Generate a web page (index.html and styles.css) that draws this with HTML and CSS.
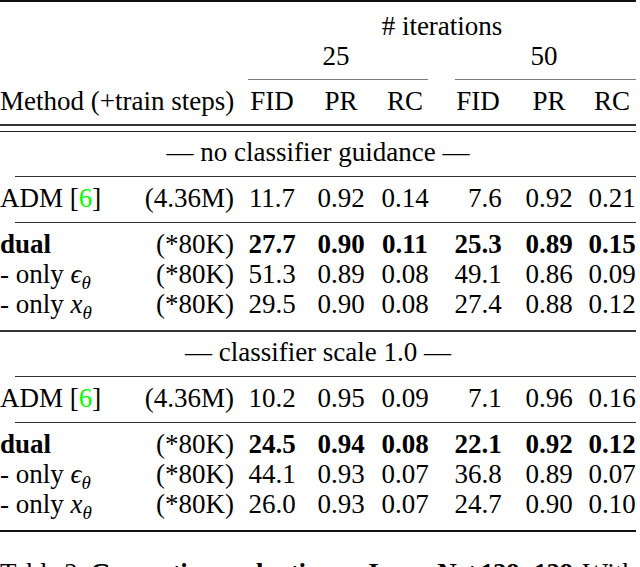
FILE: index.html
```html
<!DOCTYPE html>
<html>
<head>
<meta charset="utf-8">
<link rel="stylesheet" href="styles.css">
</head>
<body>
<div class="table">
  <div class="toprule"></div>
  <div class="row r-iter"><span class="all">#&nbsp;iterations</span></div>
  <div class="row"><span class="g1">25</span><span class="g2">50</span></div>
  <div class="cmid"><span class="cm cm1"></span><span class="cm cm2"></span></div>
  <div class="row r-head">
    <span class="c12">Method (+train steps)</span>
    <span class="n">FID</span><span class="n">PR</span><span class="n">RC</span>
    <span class="gap"></span>
    <span class="n">FID</span><span class="n">PR</span><span class="n">RC</span>
  </div>
  <div class="midrule first"></div>
  <div class="midrule second"></div>

  <div class="section">
    <div class="row r-title"><span class="full">— no classifier guidance —</span></div>
    <div class="subrule"></div>
    <div class="row r-adm">
      <span class="m">ADM [<span class="cite">6</span>]</span><span class="steps">(4.36M)</span>
      <span class="n">11.7</span><span class="n">0.92</span><span class="n">0.14</span>
      <span class="gap"></span>
      <span class="n"><span class="ph">0</span>7.6</span><span class="n">0.92</span><span class="n">0.21</span>
    </div>
    <div class="subrule"></div>
    <div class="row r-dual">
      <span class="m b">dual</span><span class="steps">(*80K)</span>
      <span class="n b">27.7</span><span class="n b">0.90</span><span class="n b">0.11</span>
      <span class="gap"></span>
      <span class="n b">25.3</span><span class="n b">0.89</span><span class="n b">0.15</span>
    </div>
    <div class="row">
      <span class="m">- only <span class="math">ϵ<sub>θ</sub></span></span><span class="steps">(*80K)</span>
      <span class="n">51.3</span><span class="n">0.89</span><span class="n">0.08</span>
      <span class="gap"></span>
      <span class="n">49.1</span><span class="n">0.86</span><span class="n">0.09</span>
    </div>
    <div class="row">
      <span class="m">- only <span class="math">x<sub>θ</sub></span></span><span class="steps">(*80K)</span>
      <span class="n">29.5</span><span class="n">0.90</span><span class="n">0.08</span>
      <span class="gap"></span>
      <span class="n">27.4</span><span class="n">0.88</span><span class="n">0.12</span>
    </div>
  </div>
  <div class="midrule sec-end"></div>

  <div class="section">
    <div class="row r-title"><span class="full">— classifier scale 1.0 —</span></div>
    <div class="subrule"></div>
    <div class="row r-adm">
      <span class="m">ADM [<span class="cite">6</span>]</span><span class="steps">(4.36M)</span>
      <span class="n">10.2</span><span class="n">0.95</span><span class="n">0.09</span>
      <span class="gap"></span>
      <span class="n"><span class="ph">0</span>7.1</span><span class="n">0.96</span><span class="n">0.16</span>
    </div>
    <div class="subrule"></div>
    <div class="row r-dual">
      <span class="m b">dual</span><span class="steps">(*80K)</span>
      <span class="n b">24.5</span><span class="n b">0.94</span><span class="n b">0.08</span>
      <span class="gap"></span>
      <span class="n b">22.1</span><span class="n b">0.92</span><span class="n b">0.12</span>
    </div>
    <div class="row">
      <span class="m">- only <span class="math">ϵ<sub>θ</sub></span></span><span class="steps">(*80K)</span>
      <span class="n">44.1</span><span class="n">0.93</span><span class="n">0.07</span>
      <span class="gap"></span>
      <span class="n">36.8</span><span class="n">0.89</span><span class="n">0.07</span>
    </div>
    <div class="row">
      <span class="m">- only <span class="math">x<sub>θ</sub></span></span><span class="steps">(*80K)</span>
      <span class="n">26.0</span><span class="n">0.93</span><span class="n">0.07</span>
      <span class="gap"></span>
      <span class="n">24.7</span><span class="n">0.90</span><span class="n">0.10</span>
    </div>
  </div>
  <div class="bottomrule"></div>
</div>
<p class="caption">Table 2: <b>Generation evaluation on ImageNet 128×128.</b> With</p>
</body>
</html>
```

FILE: styles.css
```css
html, body {
  margin: 0;
  padding: 0;
  background: #fff;
}
body {
  width: 640px;
  height: 567px;
  overflow: hidden;
  font-family: "Liberation Serif", "Times New Roman", serif;
  font-size: 27px;
  color: #000;
}
.table {
  width: 636px;
}
.row, .cmid {
  display: grid;
  grid-template-columns: 140px 100px 64px 74px 54px 14px 64px 78px 48px;
}
.row {
  height: 30px;
  line-height: 30px;
  white-space: nowrap;
}
.all { grid-column: 3 / 10; text-align: center; padding-left: 8px; }
.g1 { grid-column: 3 / 6; text-align: center; }
.g2 { grid-column: 7 / 10; text-align: center; padding-left: 6px; }
.c12 { grid-column: 1 / 3; }
.full { grid-column: 1 / 10; text-align: center; }
.m { grid-column: 1 / 2; }
.steps { grid-column: 2 / 3; text-align: right; padding-right: 6px; }
.n { text-align: center; }
.b { font-weight: bold; }
.cite { color: #00ff00; }
.ph { visibility: hidden; }
.math {
  font-family: "Liberation Serif", "DejaVu Serif", serif;
  font-style: italic;
}
.math sub {
  font-size: 19px;
  line-height: 0;
  vertical-align: -6px;
}

.toprule, .bottomrule {
  height: 2px;
  background: #111;
}
.r-iter { margin-top: 9px; }
.cmid { margin-top: 8px; height: 1px; }
.cm { height: 1px; background: #7a7a7a; }
.cm1 { grid-column: 3 / 6; margin-left: 8px; margin-right: 4px; }
.cm2 { grid-column: 7 / 10; margin-left: 9px; }
.r-head { margin-top: 6px; }

.midrule { height: 2px; background: #333; }
.midrule.first { margin-top: 8px; }
.midrule.second { margin-top: 5px; height: 1px; background: #222; }
.midrule.sec-end { margin-top: 11px; }

.r-title { margin-top: 5px; }
.subrule {
  height: 1px;
  background: #333;
  margin-left: 15px;
  margin-top: 9px;
}
.r-adm, .r-dual { margin-top: 6px; }
.bottomrule { margin-top: 11px; }

.caption {
  width: 640px;
  margin: 26px 0 0 0;
  line-height: 30px;
  white-space: nowrap;
  overflow: hidden;
  word-spacing: -2px;
}
.caption b {
  letter-spacing: -0.6px;
}
```
